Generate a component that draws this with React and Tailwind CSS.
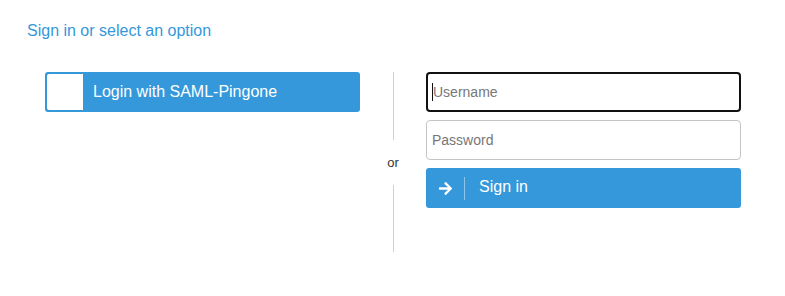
import React from "react";
import { FaArrowRight } from "react-icons/fa";

export default function App() {
  return (
    <div className="w-[785px] h-[296px] bg-white font-['Liberation_Sans',Arial,sans-serif] pt-[22px]">
      <div className="pl-[27px] text-[16px] leading-[18px] text-[#3498db]">Sign in or select an option</div>
      <div className="flex mt-[32px] pl-[45px]">
        <div className="w-[315px]">
          <button className="w-full h-[40px] flex items-stretch bg-[#3498db] border-2 border-[#3498db] rounded-[3px] text-white text-[16px]">
            <span className="w-[36px] bg-white rounded-l-[2px]"></span>
            <span className="flex items-center pl-[10px]">Login with SAML-Pingone</span>
          </button>
        </div>
        <div className="w-[66px] flex flex-col items-center">
          <div className="w-px h-[68px] bg-[#d0d0d0]"></div>
          <div className="h-[45px] flex items-center text-[13px] text-[#333]">or</div>
          <div className="w-px h-[67px] bg-[#d0d0d0]"></div>
        </div>
        <div className="w-[315px] flex flex-col">
          <div className="h-[40px] border-2 border-[#111] rounded-[4px] flex items-center pl-[4px] text-[14px] text-[#777]">
            <span className="w-px h-[18px] bg-[#111]"></span>
            <span>Username</span>
          </div>
          <div className="mt-[8px] h-[40px] border border-[#c4c4c4] rounded-[4px] flex items-center pl-[5px] text-[14px] text-[#777]">
            Password
          </div>
          <button className="mt-[8px] h-[40px] bg-[#3498db] rounded-[3px] flex items-center text-white text-[16px] leading-none">
            <span className="w-[38px] flex justify-center"><FaArrowRight className="w-[15px] h-[15px]" /></span>
            <span className="w-px h-[23px] bg-[#8cc4ea]"></span>
            <span className="pl-[14px] pb-[2px]">Sign in</span>
          </button>
        </div>
      </div>
    </div>
  );
}
